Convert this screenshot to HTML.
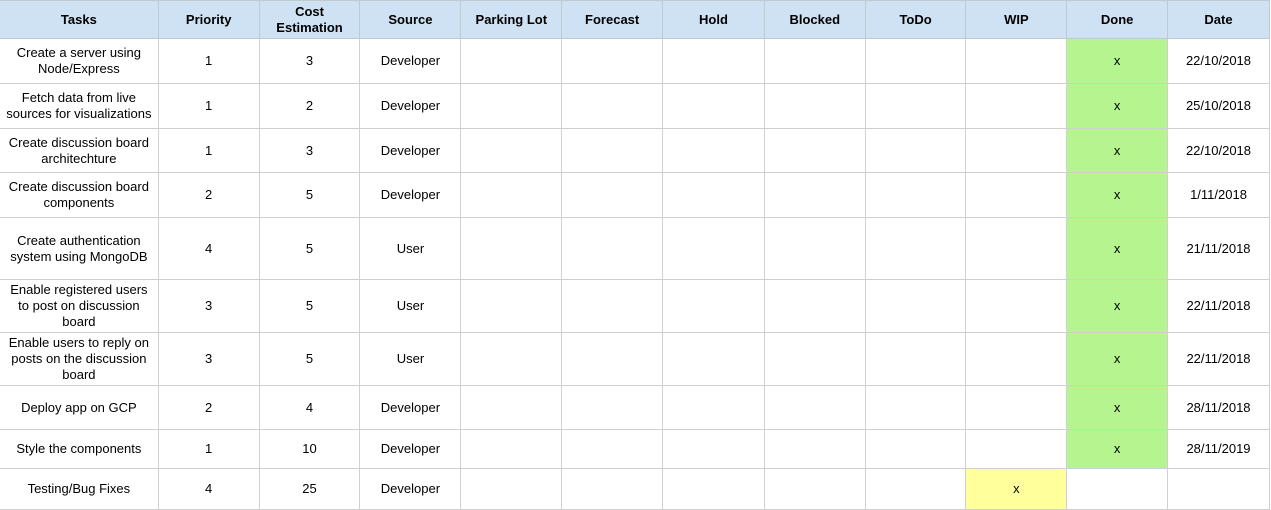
<!DOCTYPE html>
<html><head><style>
body{margin:0;background:#fff;font-family:"Liberation Sans",Arial,sans-serif;font-size:13px;color:#000;overflow:hidden}
table{border-collapse:collapse;table-layout:fixed;position:absolute;left:-1px;top:0}
td,th{border:1px solid #d0d0d0;text-align:center;vertical-align:middle;padding:0 6px;line-height:16px;overflow:hidden}
th{background:#cfe2f3;font-weight:bold;border-color:#c0c8d0}
.g{background:#b6f490}.y{background:#ffff9c}
</style></head><body>
<table>
<colgroup><col style="width:159px"><col style="width:101px"><col style="width:101px"><col style="width:101px"><col style="width:101px"><col style="width:101px"><col style="width:102px"><col style="width:101px"><col style="width:101px"><col style="width:101px"><col style="width:101px"><col style="width:102px"></colgroup>
<tr style="height:38px"><th>Tasks</th><th>Priority</th><th>Cost Estimation</th><th>Source</th><th>Parking Lot</th><th>Forecast</th><th>Hold</th><th>Blocked</th><th>ToDo</th><th>WIP</th><th>Done</th><th>Date</th></tr>
<tr style="height:45px"><td>Create a server using Node/Express</td><td>1</td><td>3</td><td>Developer</td><td></td><td></td><td></td><td></td><td></td><td></td><td class="g">x</td><td>22/10/2018</td></tr>
<tr style="height:45px"><td>Fetch data from live sources for visualizations</td><td>1</td><td>2</td><td>Developer</td><td></td><td></td><td></td><td></td><td></td><td></td><td class="g">x</td><td>25/10/2018</td></tr>
<tr style="height:44px"><td>Create discussion board architechture</td><td>1</td><td>3</td><td>Developer</td><td></td><td></td><td></td><td></td><td></td><td></td><td class="g">x</td><td>22/10/2018</td></tr>
<tr style="height:45px"><td>Create discussion board components</td><td>2</td><td>5</td><td>Developer</td><td></td><td></td><td></td><td></td><td></td><td></td><td class="g">x</td><td>1/11/2018</td></tr>
<tr style="height:62px"><td>Create authentication system using MongoDB</td><td>4</td><td>5</td><td>User</td><td></td><td></td><td></td><td></td><td></td><td></td><td class="g">x</td><td>21/11/2018</td></tr>
<tr style="height:53px"><td>Enable registered users<br>to post on discussion<br>board</td><td>3</td><td>5</td><td>User</td><td></td><td></td><td></td><td></td><td></td><td></td><td class="g">x</td><td>22/11/2018</td></tr>
<tr style="height:53px"><td>Enable users to reply on<br>posts on the discussion<br>board</td><td>3</td><td>5</td><td>User</td><td></td><td></td><td></td><td></td><td></td><td></td><td class="g">x</td><td>22/11/2018</td></tr>
<tr style="height:44px"><td>Deploy app on GCP</td><td>2</td><td>4</td><td>Developer</td><td></td><td></td><td></td><td></td><td></td><td></td><td class="g">x</td><td>28/11/2018</td></tr>
<tr style="height:39px"><td>Style the components</td><td>1</td><td>10</td><td>Developer</td><td></td><td></td><td></td><td></td><td></td><td></td><td class="g">x</td><td>28/11/2019</td></tr>
<tr style="height:41px"><td>Testing/Bug Fixes</td><td>4</td><td>25</td><td>Developer</td><td></td><td></td><td></td><td></td><td></td><td class="y">x</td><td></td><td></td></tr>
</table>
</body></html>
